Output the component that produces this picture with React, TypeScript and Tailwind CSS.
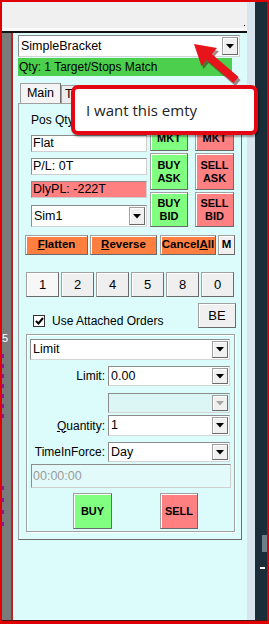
import React from "react";

const raised =
  "border border-[#a0a0a0] border-r-[#6a6a6a] border-b-[#6a6a6a] shadow-[inset_1px_1px_0_#ffffff]";

function Arrow({ disabled }: { disabled?: boolean }) {
  return (
    <svg width="8" height="5" viewBox="0 0 8 5">
      <polygon points="0,0 8,0 4,4.5" fill={disabled ? "#a6a6a6" : "#000"} />
    </svg>
  );
}

function Combo({
  text,
  className,
  disabled,
}: {
  text?: string;
  className: string;
  disabled?: boolean;
}) {
  return (
    <div
      className={`flex items-center border border-[#8c8c8c] border-b-[#d4d4d4] border-r-[#d4d4d4] ${
        disabled ? "bg-[#dcf6f6]" : "bg-white"
      } ${className}`}
    >
      <span className="flex-1 pl-[2px] text-[12.5px] leading-none">{text}</span>
      <div
        className={`mr-[1px] flex h-[calc(100%-2px)] w-[16px] items-center justify-center bg-[#f0f0f0] ${raised}`}
      >
        <Arrow disabled={disabled} />
      </div>
    </div>
  );
}

function Btn({
  children,
  className,
}: {
  children: React.ReactNode;
  className: string;
}) {
  return (
    <div
      className={`flex flex-col items-center justify-center ${raised} ${className}`}
    >
      {children}
    </div>
  );
}

function TextBox({ children, className }: { children: React.ReactNode; className: string }) {
  return (
    <div
      className={`flex items-center border border-[#8c8c8c] border-b-[#cfcfcf] border-r-[#cfcfcf] pl-[1px] text-[12.5px] leading-none ${className}`}
    >
      {children}
    </div>
  );
}

function Row({ label, children }: { label: React.ReactNode; children: React.ReactNode }) {
  return (
    <div className="flex items-center">
      <div className="w-[78px] text-right text-[12px] leading-none">{label}</div>
      <div className="ml-[3px]">{children}</div>
    </div>
  );
}

export default function App() {
  const dashesA = [0, 1, 2, 3, 4, 5, 6];
  const dashesB = [0, 1, 2, 3];
  const nums = ["1", "2", "4", "5", "8", "0"];

  return (
    <div className="relative h-[624px] w-[269px] overflow-hidden bg-[#e00000] p-[2px] pb-[3px] font-['Liberation_Sans',Arial,sans-serif] text-black">
      <div className="flex h-full border-b border-[#4a1212]">
        <div className="flex w-[245px] flex-col">
          {/* top strip */}
          <div className="relative h-[29px] border-b-[3px] border-[#fafafa] bg-[#f0f0f0]">
            <div className="absolute bottom-[2px] right-[2px] h-[1px] w-[1px] bg-black" />
          </div>
          <div className="h-[2px] bg-[#111]" />

          <div className="flex flex-1">
            {/* left gray strip */}
            <div className="flex w-[9px] flex-col bg-[#7b7b7b] pt-[299px]">
              <span className="text-[11px] leading-[12px] text-white">5</span>
              <div className="mt-[10px] flex flex-col gap-[6px]">
                {dashesA.map((i) => (
                  <div key={i} className="h-[4px] w-[2px] bg-[#8a1a9a]" />
                ))}
              </div>
              <div className="mt-[68px] flex flex-col gap-[8px]">
                {dashesB.map((i) => (
                  <div key={i} className="h-[4px] w-[2px] bg-[#8a1a9a]" />
                ))}
              </div>
            </div>
            <div className="w-[2px] bg-[#bb2222]" />

            {/* cyan panel */}
            <div className="flex flex-1 flex-col bg-[#dcfcfc] px-[5px] pt-[2px]">
              <Combo text="SimpleBracket" className="h-[22px] w-[222px]" />
              <div className="mt-[1px] flex h-[18px] w-[214px] items-center bg-[#4ccf4c] pl-[1px] text-[12px] leading-none">
                Qty: 1 Target/Stops Match
              </div>

              {/* tabs */}
              <div className="mt-[7px] flex h-[20px] items-end pl-[2px]">
                <div className="flex h-[20px] w-[41px] items-center justify-center border border-b-0 border-[#a0a0a0] border-r-[#6a6a6a] bg-[#f4f4f4] text-[12.5px]">
                  Main
                </div>
                <div className="flex h-[18px] w-[60px] items-center border border-b-0 border-[#a0a0a0] bg-[#ececec] pl-[3px] text-[12.5px]">
                  Targets
                </div>
              </div>

              {/* tab page */}
              <div className="h-[437px] w-[224px] border border-[#a0a0a0] border-b-[#6e6e6e] border-r-[#6e6e6e] pl-[6px] pt-[9px]">
                <div className="ml-[6px] flex">
                  <div className="flex w-[116px] flex-col">
                    <div className="h-[22px] text-[12px] leading-[14px]">Pos Qty</div>
                    <TextBox className="h-[17px] bg-white">Flat</TextBox>
                    <TextBox className="mt-[6px] h-[17px] bg-white">P/L: 0T</TextBox>
                    <TextBox className="mt-[6px] h-[17px] bg-[#ff8080]">DlyPL: -222T</TextBox>
                    <Combo text="Sim1" className="mt-[7px] h-[22px] w-[116px]" />
                  </div>
                  <div className="ml-[3px] flex w-[38px] flex-col gap-[2px] text-[11px] font-bold leading-[13px]">
                    <Btn className="h-[38px] bg-[#80ff80]">
                      <span>BUY</span>
                      <span>MKT</span>
                    </Btn>
                    <Btn className="h-[37px] bg-[#80ff80]">
                      <span>BUY</span>
                      <span>ASK</span>
                    </Btn>
                    <Btn className="h-[35px] bg-[#80ff80]">
                      <span>BUY</span>
                      <span>BID</span>
                    </Btn>
                  </div>
                  <div className="ml-[7px] flex w-[39px] flex-col gap-[2px] text-[11px] font-bold leading-[13px]">
                    <Btn className="h-[38px] bg-[#ff8080]">
                      <span>SELL</span>
                      <span>MKT</span>
                    </Btn>
                    <Btn className="h-[37px] bg-[#ff8080]">
                      <span>SELL</span>
                      <span>ASK</span>
                    </Btn>
                    <Btn className="h-[35px] bg-[#ff8080]">
                      <span>SELL</span>
                      <span>BID</span>
                    </Btn>
                  </div>
                </div>

                {/* flatten row */}
                <div className="mt-[8px] flex h-[20px] text-[11.5px] font-bold">
                  <Btn className="w-[63px] bg-[#ff7f40]">
                    <span>
                      <u>F</u>latten
                    </span>
                  </Btn>
                  <Btn className="ml-[2px] w-[67px] bg-[#ff7f40]">
                    <span>
                      <u>R</u>everse
                    </span>
                  </Btn>
                  <Btn className="ml-[3px] w-[56px] bg-[#ff7f40]">
                    <span>
                      Cancel<u>A</u>ll
                    </span>
                  </Btn>
                  <Btn className="ml-[2px] w-[17px] bg-[#f0f0f0]">
                    <span>M</span>
                  </Btn>
                </div>

                {/* quantity presets */}
                <div className="ml-[1px] mt-[17px] flex h-[25px] gap-[2px] text-[13px]">
                  {nums.map((n, i) => (
                    <Btn
                      key={n}
                      className={`w-[33px] ${i === 0 ? "bg-[#f7f7f7]" : "bg-[#efefef]"}`}
                    >
                      <span>{n}</span>
                    </Btn>
                  ))}
                </div>

                {/* attached orders */}
                <div className="mt-[6px] flex h-[25px] w-[211px]">
                  <div className="ml-[8px] mt-[10px] flex items-center">
                    <div className="flex h-[12px] w-[12px] items-center justify-center border border-[#333] bg-white">
                      <svg width="9" height="8" viewBox="0 0 9 8">
                        <polyline points="1,4 3.5,6.5 8,1" fill="none" stroke="#000" strokeWidth="2" />
                      </svg>
                    </div>
                    <span className="ml-[7px] text-[12px] leading-none">Use Attached Orders</span>
                  </div>
                  <Btn className="ml-auto w-[38px] bg-[#f0f0f0] text-[13px]">
                    <span>BE</span>
                  </Btn>
                </div>

                {/* order group */}
                <div className="ml-[1px] mt-[6px] h-[198px] w-[209px] border border-[#a0a0a0] shadow-[inset_1px_1px_0_#ffffff,1px_1px_0_#ffffff] pt-[4px]">
                  <Combo text="Limit" className="ml-[3px] h-[21px] w-[200px]" />
                  <div className="mt-[6px]">
                    <Row label="Limit:">
                      <Combo text="0.00" className="h-[20px] w-[122px]" />
                    </Row>
                  </div>
                  <div className="mt-[7px]">
                    <Row label="">
                      <Combo disabled className="h-[20px] w-[122px]" />
                    </Row>
                  </div>
                  <div className="mt-[2px]">
                    <Row
                      label={
                        <span>
                          <u>Q</u>uantity:
                        </span>
                      }
                    >
                      <Combo text="1" className="h-[21px] w-[122px]" />
                    </Row>
                  </div>
                  <div className="mt-[6px]">
                    <Row label="TimeInForce:">
                      <Combo text="Day" className="h-[20px] w-[122px]" />
                    </Row>
                  </div>
                  <TextBox className="ml-[4px] mt-[2px] h-[24px] w-[200px] bg-[#e2fafa] text-[12.5px] text-[#9a9a9a]">
                    00:00:00
                  </TextBox>
                  <div className="mt-[5px] flex h-[36px] text-[11px] font-bold">
                    <Btn className="ml-[46px] w-[39px] bg-[#80ff80]">
                      <span>BUY</span>
                    </Btn>
                    <Btn className="ml-[48px] w-[38px] bg-[#ff8080]">
                      <span>SELL</span>
                    </Btn>
                  </div>
                </div>
              </div>
            </div>
          </div>
        </div>

        <div className="w-[8px] bg-[#d8e5ee]" />
        <div className="flex w-[12px] flex-col items-end bg-[#1b2d39]">
          <div className="mt-[533px] h-[17px] w-[5px] bg-[#6f7f89]" />
          <div className="mr-[2px] mt-[15px] h-[2px] w-[5px] bg-[#f2f2f2]" />
        </div>
      </div>

      {/* annotation arrow */}
      <svg
        className="pointer-events-none absolute left-0 top-0"
        width="269"
        height="140"
        viewBox="0 0 269 140"
      >
        <polygon
          points="196,47 219,50.9 213.8,57 240.6,80 235.4,86 208.6,63 203.4,69.1"
          fill="#5a1010"
          opacity="0.5"
        />
        <polygon
          points="194,44 217,47.9 211.8,54 238.6,77 233.4,83 206.6,60 201.4,66.1"
          fill="#e8141c"
        />
      </svg>

      {/* callout */}
      <div className="absolute left-[71px] top-[85px] flex h-[50px] w-[187px] items-center rounded-[7px] border-4 border-[#e30613] bg-white pl-[11px] font-['Open_Sans',sans-serif] text-[15px] text-[#222] shadow-[1px_2px_2px_rgba(0,0,0,0.35)]">
        I want this emty
      </div>
    </div>
  );
}
